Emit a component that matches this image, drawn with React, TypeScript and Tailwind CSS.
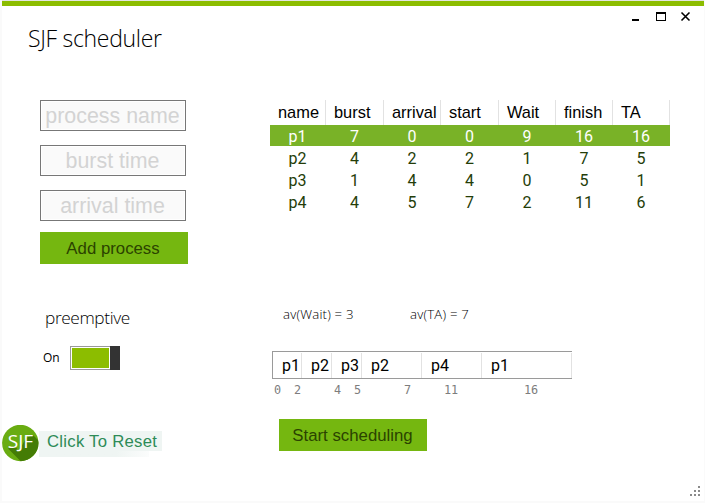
const columns = [
  { label: "name", cell: "w-14", head: "pl-2" },
  { label: "burst", cell: "w-[58px]", head: "pl-2" },
  { label: "arrival", cell: "w-[57px]", head: "pl-2" },
  { label: "start", cell: "w-[58px]", head: "pl-2" },
  { label: "Wait", cell: "w-[57px]", head: "pl-2" },
  { label: "finish", cell: "w-[57px]", head: "pl-2" },
  { label: "TA", cell: "w-[57px]", head: "pl-2" },
];

const rows = [
  ["p1", "7", "0", "0", "9", "16", "16"],
  ["p2", "4", "2", "2", "1", "7", "5"],
  ["p3", "1", "4", "4", "0", "5", "1"],
  ["p4", "4", "5", "7", "2", "11", "6"],
];

const gantt = [
  { name: "p1", width: "w-[29px]" },
  { name: "p2", width: "w-[30px]" },
  { name: "p3", width: "w-[30px]" },
  { name: "p2", width: "w-[60px]" },
  { name: "p4", width: "w-[60px]" },
  { name: "p1", width: "w-[90px]" },
];

const times = [
  { t: "0", width: "w-5" },
  { t: "2", width: "w-10" },
  { t: "4", width: "w-5" },
  { t: "5", width: "w-[50px]" },
  { t: "7", width: "w-10" },
  { t: "11", width: "w-20" },
  { t: "16", width: "w-5" },
];

function Field({ placeholder }: { placeholder: string }) {
  return (
    <div className="h-[31px] w-[146px] border border-[#777] bg-white p-px">
      <div className="flex h-full items-center justify-center bg-[#fafafa] pt-0.5 pr-px text-[21.4px] leading-none whitespace-nowrap text-[#d3d3d3]">
        {placeholder}
      </div>
    </div>
  );
}

function TitleBar() {
  return (
    <header className="h-[94px]">
      <div className="flex h-5 items-start justify-end pr-[13px]">
        <svg width="62" height="20" viewBox="0 0 62 20" fill="none" stroke="#000" shapeRendering="crispEdges">
          <path d="M3 14H10" strokeWidth="2" />
          <path d="M27 7H37" strokeWidth="2" />
          <path d="M27.5 8V14.5H36.5V8" />
          <path d="M52.5 6.5L60.5 14.5M60.5 6.5L52.5 14.5" strokeWidth="1.6" shapeRendering="auto" />
        </svg>
      </div>
      <h1 className="-mt-0.5 pl-[26px] font-['Open_Sans','Noto_Sans',sans-serif] text-[23px] leading-[28px] font-light tracking-[-0.3px] text-black">
        SJF scheduler
      </h1>
    </header>
  );
}

function ProcessTable() {
  return (
    <div className="w-[400px]">
      <div className="flex h-[25px]">
        {columns.map((c) => (
          <div key={c.label} className={`${c.cell} ${c.head} border-r border-[#e2e2e2] text-[16.4px] leading-[25px] whitespace-nowrap text-black`}>
            {c.label}
          </div>
        ))}
      </div>
      {rows.map((r, i) => (
        <div
          key={r[0]}
          className={
            i === 0
              ? "mb-px flex h-[21px] bg-[#79b227] text-white"
              : "flex h-[22px] text-[#243d08]"
          }
        >
          {r.map((v, j) => (
            <div key={j} className={`${columns[j].cell} pr-px text-center font-['Roboto',sans-serif] text-[16px] leading-[23px]`}>
              {v}
            </div>
          ))}
        </div>
      ))}
    </div>
  );
}

function Logo() {
  return (
    <svg className="shrink-0" width="37" height="37" viewBox="0 0 37 37">
      <defs>
        <clipPath id="disc">
          <circle cx="18.3" cy="18" r="18.2" />
        </clipPath>
      </defs>
      <g clipPath="url(#disc)">
        <rect width="37" height="37" fill="#69ac11" />
        <path d="M6 23.5L19.5 37H37V16L31 10L24 13L17 26L13 21Z" fill="#447c05" />
      </g>
      <text x="18.5" y="23" textAnchor="middle" fill="#fff" fontFamily="Open Sans, sans-serif" fontSize="18.5" textLength="25.5" lengthAdjust="spacingAndGlyphs">
        SJF
      </text>
    </svg>
  );
}

export default function App() {
  return (
    <div className="h-[503px] w-[705px] overflow-hidden bg-[#fafafa] pr-px pb-0.5 pl-0.5 font-['Liberation_Sans',Arial,sans-serif]">
      <div className="flex h-[501px] flex-col bg-white">
        <div className="h-1.5 shrink-0 border-t border-[#e3e6df] bg-[#8cbd00]" />
        <TitleBar />
        <main className="flex flex-1">
          <section className="w-[268px]">
            <div className="flex flex-col gap-3.5 pl-[38px]">
              <Field placeholder="process name" />
              <Field placeholder="burst time" />
              <Field placeholder="arrival time" />
            </div>
            <button className="mt-[11px] ml-[38px] block h-8 w-[148px] bg-[#75b710] pr-0.5 text-[16.8px] leading-[34px] text-[#2b4300]">
              Add process
            </button>
            <p className="mt-[42px] ml-[43px] h-6 font-['Open_Sans','Noto_Sans',sans-serif] text-[17.3px] leading-6 font-light tracking-[-0.38px] text-black">
              preemptive
            </p>
            <div className="mt-4 ml-[41px] flex h-6 items-center">
              <span className="w-[27px] font-['Open_Sans','Noto_Sans',sans-serif] text-[12px] leading-[26px] text-black">On</span>
              <div className="flex h-6 w-[50px]">
                <div className="w-10 border-y border-l border-[#999] py-px pr-px pl-px">
                  <div className="h-full bg-[#8cbd00]" />
                </div>
                <div className="w-2.5 bg-[#333]" />
              </div>
            </div>
            <div className="mt-[55px] flex h-[37px] items-start">
              <Logo />
              <div className="mt-1.5 h-5 w-[123px] bg-[#eff5f3] pl-2 text-[16.7px] leading-5 whitespace-nowrap text-[#2e8b57]">
                <span className="block h-5 pt-px tracking-[0.27px]">Click To Reset</span>
                <div className="-ml-2 h-1.5 w-[110px] bg-linear-to-r from-[#eff5f3] from-70% to-[#fbfcfc]" />
              </div>
            </div>
          </section>
          <section className="flex flex-1 flex-col">
            <ProcessTable />
            <div className="mt-[89px] mb-px ml-[13px] flex h-6 font-['Open_Sans','Noto_Sans',sans-serif] text-[13.2px] leading-6 font-light text-black">
              <span className="w-[127px] tracking-[0.2px]">av(Wait) = 3</span>
              <span className="tracking-[0.2px]">av(TA) = 7</span>
            </div>
            <div className="mt-6 ml-0.5 flex h-7 w-[300px] border-y border-l border-[#9a9a9a] pt-px">
              {gantt.map((g, i) => (
                <div key={i} className={`${g.width} border-r border-[#e2e2e2] pl-[9px] font-['Roboto',sans-serif] text-[16px] leading-[26px] text-black`}>
                  {g.name}
                </div>
              ))}
            </div>
            <div className="mt-[3px] mb-px ml-1 flex h-4 font-['DejaVu_Sans_Mono',monospace] text-[11.8px] leading-4 text-[#7d7d7d]">
              {times.map((t) => (
                <span key={t.t} className={t.width}>{t.t}</span>
              ))}
            </div>
            <button className="mt-5 ml-[9px] block h-8 w-[148px] shrink-0 bg-[#75b710] pr-px text-[16.8px] leading-[34px] text-[#2b4300]">
              Start scheduling
            </button>
            <svg className="mt-auto mr-[2px] mb-[3px] self-end" width="12" height="12" viewBox="0 0 12 12" fill="#8a8a8a" shapeRendering="crispEdges">
              <path d="M8 0h2v2h-2zM4 4h2v2h-2zM8 4h2v2h-2zM0 8h2v2h-2zM4 8h2v2h-2zM8 8h2v2h-2z" />
            </svg>
          </section>
        </main>
      </div>
    </div>
  );
}
